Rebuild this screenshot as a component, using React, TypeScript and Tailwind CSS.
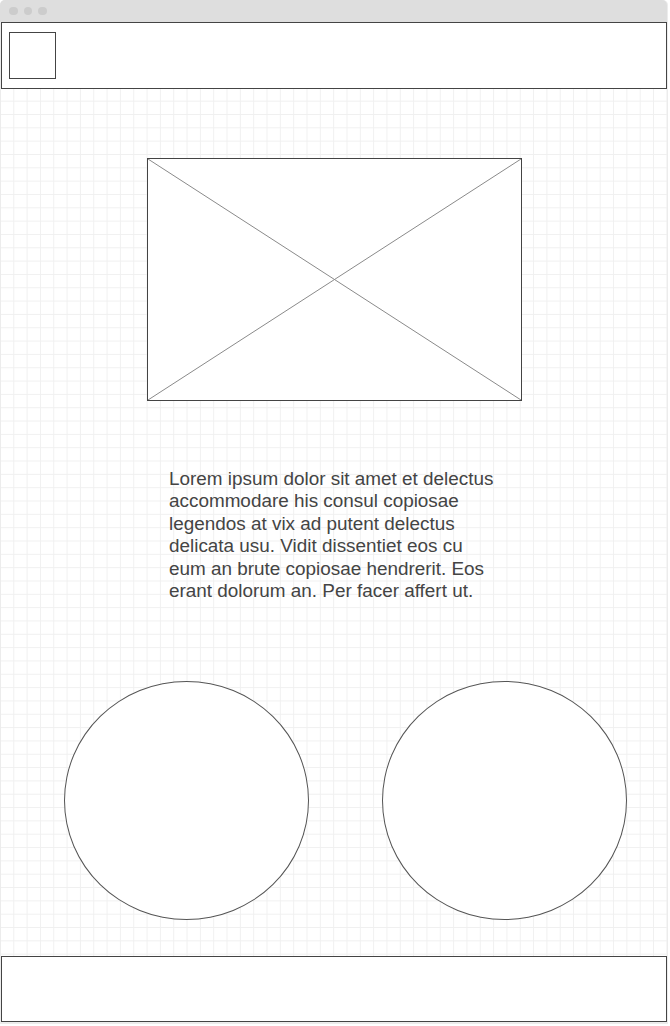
import React from 'react';

const LOREM =
    'Lorem ipsum dolor sit amet et delectus accommodare his consul copiosae legendos at vix ad putent delectus delicata usu. Vidit dissentiet eos cu eum an brute copiosae hendrerit. Eos erant dolorum an. Per facer affert ut.';

// Image placeholder: box with a cross through it
const ImagePlaceholder: React.FC = () => (
    <div className="relative w-[375px] h-[243px] border border-[#444] bg-white">
        <svg className="absolute inset-0 w-full h-full" viewBox="0 0 373 241" preserveAspectRatio="none">
            <line x1="0" y1="0" x2="373" y2="241" stroke="#8a8a8a" strokeWidth="1" />
            <line x1="373" y1="0" x2="0" y2="241" stroke="#8a8a8a" strokeWidth="1" />
        </svg>
    </div>
);

const Circle: React.FC = () => (
    <div className="w-[245px] h-[239px] rounded-[50%] border border-[#555] bg-white" />
);

export default function App() {
    return (
        <div className="w-[670px] h-[1026px] bg-white font-['Liberation_Sans',Arial,sans-serif]">
            <div className="w-[668px] h-[1024px] flex flex-col bg-[#ececec] rounded-t-[5px]">
                {/* title bar */}
                <div className="w-[667px] h-[22px] shrink-0 bg-[#dedede] rounded-t-[5px] flex items-center gap-[6px] pl-[9px]">
                    <span className="w-[8.5px] h-[8.5px] rounded-full bg-[#cccccc]" />
                    <span className="w-[8.5px] h-[8.5px] rounded-full bg-[#cccccc]" />
                    <span className="w-[8.5px] h-[8.5px] rounded-full bg-[#cccccc]" />
                </div>

                <div className="ml-px w-[666px] flex flex-col">
                    {/* header */}
                    <header className="h-[67px] border border-[#444] bg-white pl-[7px] pt-[9px]">
                        <div className="w-[47px] h-[47px] border border-[#444]" />
                    </header>

                    {/* body */}
                    <main className="h-[867px] flex flex-col bg-white [background-image:linear-gradient(to_right,#f0f0f0_1px,transparent_1px),linear-gradient(to_bottom,#f0f0f0_1px,transparent_1px)] [background-size:13.333px_13.333px] [background-position:12.3px_11.7px]">
                        <div className="mt-[69px] ml-[146px]">
                            <ImagePlaceholder />
                        </div>

                        <p className="mt-[67px] ml-[168px] w-[332px] text-[18.9px] leading-[22.4px] text-[#444]">
                            {LOREM}
                        </p>

                        <div className="mt-[79px] ml-[63px] flex gap-[73px]">
                            <Circle />
                            <Circle />
                        </div>
                    </main>

                    {/* footer */}
                    <footer className="h-[66px] border border-[#444] bg-white" />
                </div>
            </div>
        </div>
    );
}
